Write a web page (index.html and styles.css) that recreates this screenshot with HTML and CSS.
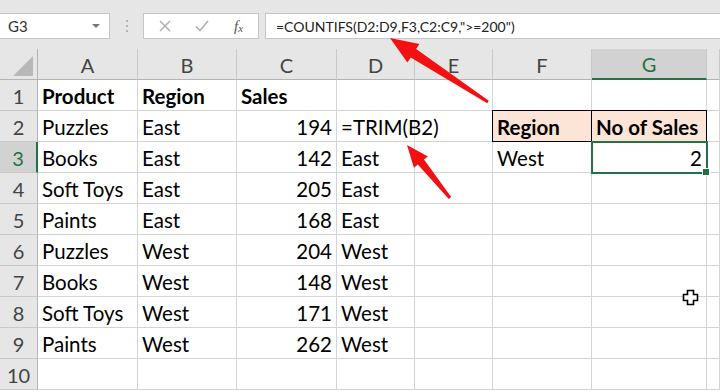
FILE: index.html
```
<!DOCTYPE html>
<html>
<head>
<meta charset="utf-8">
<link rel="stylesheet" href="styles.css">
</head>
<body>
<div class="toolbar">
  <div class="namebox"><span class="nb-text">G3</span><span class="nb-arrow"></span></div>
  <div class="sep"><i></i><i></i><i></i></div>
  <div class="fxbox">
    <svg class="ico" width="14" height="14" viewBox="0 0 14 14"><path d="M2 2 L12 12 M12 2 L2 12" stroke="#b0b0b0" stroke-width="1.5" fill="none"/></svg>
    <svg class="ico" width="16" height="14" viewBox="0 0 16 14"><path d="M2 7.5 L6 11.5 L14 2" stroke="#b0b0b0" stroke-width="1.6" fill="none"/></svg>
    <span class="fx">f<sub>x</sub></span>
  </div>
  <div class="formula">=COUNTIFS(D2:D9,F3,C2:C9,"&gt;=200")</div>
</div>
<div class="sheet">
  <div class="hd corner"><span class="tri"></span></div>
  <div class="hd col">A</div><div class="hd col">B</div><div class="hd col">C</div><div class="hd col">D</div><div class="hd col">E</div><div class="hd col">F</div><div class="hd col sel">G</div><div class="hd col last"></div>

  <div class="hd row">1</div><div class="c b">Product</div><div class="c b">Region</div><div class="c b">Sales</div><div class="c"></div><div class="c"></div><div class="c"></div><div class="c"></div><div class="c"></div>
  <div class="hd row">2</div><div class="c">Puzzles</div><div class="c">East</div><div class="c r">194</div><div class="c ov">=TRIM(B2)</div><div class="c"></div><div class="c b peach pl">Region</div><div class="c b peach pr">No of Sales</div><div class="c"></div>
  <div class="hd row rsel">3</div><div class="c">Books</div><div class="c">East</div><div class="c r">142</div><div class="c">East</div><div class="c"></div><div class="c">West</div><div class="c r active">2</div><div class="c"></div>
  <div class="hd row">4</div><div class="c">Soft Toys</div><div class="c">East</div><div class="c r">205</div><div class="c">East</div><div class="c"></div><div class="c"></div><div class="c"></div><div class="c"></div>
  <div class="hd row">5</div><div class="c">Paints</div><div class="c">East</div><div class="c r">168</div><div class="c">East</div><div class="c"></div><div class="c"></div><div class="c"></div><div class="c"></div>
  <div class="hd row">6</div><div class="c">Puzzles</div><div class="c">West</div><div class="c r">204</div><div class="c">West</div><div class="c"></div><div class="c"></div><div class="c"></div><div class="c"></div>
  <div class="hd row">7</div><div class="c">Books</div><div class="c">West</div><div class="c r">148</div><div class="c">West</div><div class="c"></div><div class="c"></div><div class="c"></div><div class="c"></div>
  <div class="hd row">8</div><div class="c">Soft Toys</div><div class="c">West</div><div class="c r">171</div><div class="c">West</div><div class="c"></div><div class="c"></div><div class="c"></div><div class="c"></div>
  <div class="hd row">9</div><div class="c">Paints</div><div class="c">West</div><div class="c r">262</div><div class="c">West</div><div class="c"></div><div class="c"></div><div class="c"></div><div class="c"></div>
  <div class="hd row">10</div><div class="c"></div><div class="c"></div><div class="c"></div><div class="c"></div><div class="c"></div><div class="c"></div><div class="c"></div><div class="c"></div>
</div>
<svg class="overlay" width="720" height="392" viewBox="0 0 720 392">
  <polygon fill="#f21010" points="390,38 419.4,44.1 416.1,49.1 488.8,100.7 487.2,103.3 410.7,57.5 407.4,62.5"/>
  <polygon fill="#f21010" points="407,145 427.9,156.4 424,159.6 451.2,197.1 448.8,198.9 417.8,164.6 413.9,167.8"/>
  <path d="M687.5 290.5 h6 v4 h4 v6 h-4 v4 h-6 v-4 h-4 v-6 h4 z" fill="#fff" stroke="#000" stroke-width="1.6"/>
</svg>
</body>
</html>
```
FILE: styles.css
```
* { box-sizing: border-box; }
html, body { margin: 0; padding: 0; }
body {
  width: 720px; height: 392px; overflow: hidden; position: relative;
  background: #fff;
  font-family: Lato, "Open Sans", sans-serif;
  color: #000;
}
.toolbar {
  height: 49px;
  background: #e6e6e6;
  display: flex;
  align-items: flex-start;
  padding-top: 13px;
}
.namebox {
  width: 110px; height: 26px;
  background: #fff;
  border: 1px solid #c6c6c6;
  border-left: none;
  display: flex; align-items: center; justify-content: space-between;
  padding: 0 9px 0 8px;
  font-size: 15px; color: #333;
}
.nb-arrow {
  width: 0; height: 0;
  border-left: 4px solid transparent; border-right: 4px solid transparent;
  border-top: 4px solid #777;
}
.sep {
  width: 33px; height: 26px;
  display: flex; flex-direction: column; align-items: center; justify-content: center; gap: 3px;
}
.sep i { display: block; width: 2px; height: 2px; background: #b5b5b5; }
.fxbox {
  width: 116px; height: 26px;
  background: #fff;
  border: 1px solid #c6c6c6;
  display: flex; align-items: center;
  padding-left: 14px;
  gap: 0;
}
.fxbox .ico:first-child { margin-right: 22px; }
.fxbox .ico:nth-child(2) { margin-right: 24px; }
.fx {
  font-family: "Liberation Serif", serif; font-style: italic;
  font-size: 15px; color: #555;
}
.fx sub { font-size: 11px; vertical-align: -1px; }
.formula {
  margin-left: 6px;
  flex: 1; height: 26px;
  background: #fff;
  border: 1px solid #c6c6c6;
  border-right: none;
  padding-left: 10px;
  display: flex; align-items: center;
  font-size: 14px; color: #222;
}
.sheet {
  display: grid;
  grid-template-columns: 38px 100px 99px 100px 78px 78px 99px 115px 1fr;
  grid-auto-rows: 31px;
}
.hd {
  background: #e6e6e6;
  color: #444;
  font-size: 20px;
  display: flex; align-items: center; justify-content: center;
  border-right: 1px solid #c9c9c9;
  border-bottom: 1px solid #c9c9c9;
  padding-top: 1px;
}
.hd.col { border-bottom: 1px solid #b4b4b4; }
.hd.row { border-right: 1px solid #b4b4b4; }
.hd.corner { border-bottom: 1px solid #b4b4b4; border-right: 1px solid #b4b4b4; position: relative; }
.tri {
  position: absolute; right: 4px; bottom: 3px;
  width: 0; height: 0;
  border-left: 20px solid transparent;
  border-bottom: 20px solid #b8b8b8;
}
.hd.sel { background: #d2d2d2; color: #217346; border-bottom: 2px solid #217346; }
.hd.rsel { background: #d2d2d2; color: #217346; border-right: 2px solid #217346; }
.c {
  border-right: 1px solid #d4d4d4;
  border-bottom: 1px solid #d4d4d4;
  font-size: 20.5px;
  padding: 1px 4px 0;
  display: flex; align-items: center;
  white-space: nowrap;
}
.c.b { font-weight: 700; }
.c.r { justify-content: flex-end; }
.c.ov { overflow: visible; }
.peach { background: #fce4d6; border: 1px solid #000; margin: -1px 0 0 -1px; }
.c.pr { border-left: none; margin-left: 0; }
.active { position: relative; outline: 2px solid #217346; outline-offset: -1px; }
.active::after {
  content: ""; position: absolute; right: -4px; bottom: -4px;
  width: 6px; height: 6px; background: #217346; border: 1px solid #fff;
}
.overlay { position: absolute; left: 0; top: 0; pointer-events: none; }
```
